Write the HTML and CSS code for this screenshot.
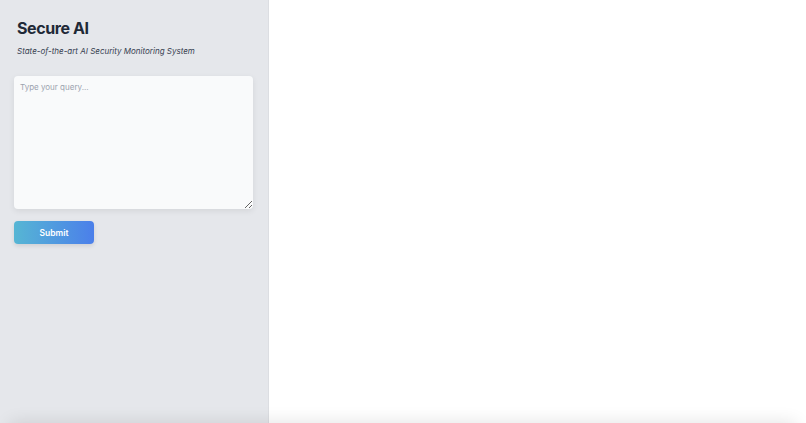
FILE: index.html
```html
<!DOCTYPE html>
<html lang="en">
<head>
    <meta charset="UTF-8">
    <meta name="viewport" content="width=device-width, initial-scale=1.0">
    <title>Secure AI</title>
    <link rel="stylesheet" href="styles.css">
</head>
<body>
    <div class="app">
        <aside class="sidebar">
            <div class="header">
                <h1>Secure AI</h1>
                <p class="tagline">State-of-the-art AI Security Monitoring System</p>
            </div>
            <textarea class="query" placeholder="Type your query..."></textarea>
            <button class="submit">Submit</button>
        </aside>
        <main class="content"></main>
    </div>
</body>
</html>
```

FILE: styles.css
```css
body {
    margin: 0;
    font-family: 'Inter', 'Noto Sans', sans-serif;
    background: #ffffff;
    color: #1f2937;
    overflow: hidden;
}

.app {
    position: relative;
    display: flex;
    height: 423px;
    overflow: hidden;
    background: #ffffff;
}

/* soft shadow along the bottom edge, from whatever sits below the fold */
.app::after {
    content: "";
    position: absolute;
    left: 10px;
    right: 10px;
    bottom: -40px;
    height: 40px;
    box-shadow: 0 0 18px rgba(0, 0, 0, 0.12);
}

.sidebar {
    width: 240px;
    flex-shrink: 0;
    background: #e5e7eb;
    border-right: 1px solid #dcdee2;
    padding: 17px 14px;
    display: flex;
    flex-direction: column;
    align-items: flex-start;
}

.header {
    padding-left: 3px;
    margin-bottom: 20px;
}

h1 {
    font-size: 16px;
    font-weight: 700;
    margin: 1px 0 8px;
    letter-spacing: -0.4px;
}

.tagline {
    margin: 0;
    font-size: 8px;
    font-style: italic;
    color: #374151;
}

.query {
    width: 239px;
    height: 133px;
    box-sizing: border-box;
    border: none;
    border-radius: 4px;
    background: #f9fafb;
    box-shadow: 0 2px 6px rgba(0, 0, 0, 0.08);
    padding: 6px 6px;
    font-family: inherit;
    font-size: 8px;
    color: #1f2937;
    resize: vertical;
    outline: none;
}

.query::placeholder {
    color: #9ca3af;
}

.submit {
    margin-top: 12px;
    width: 80px;
    height: 23px;
    border: none;
    border-radius: 4px;
    background: linear-gradient(90deg, #56b6d4, #4b7fea);
    box-shadow: 0 2px 4px rgba(0, 0, 0, 0.1);
    color: #ffffff;
    font-family: inherit;
    font-size: 8.5px;
    font-weight: 600;
    cursor: pointer;
}

.content {
    flex: 1;
}
```
